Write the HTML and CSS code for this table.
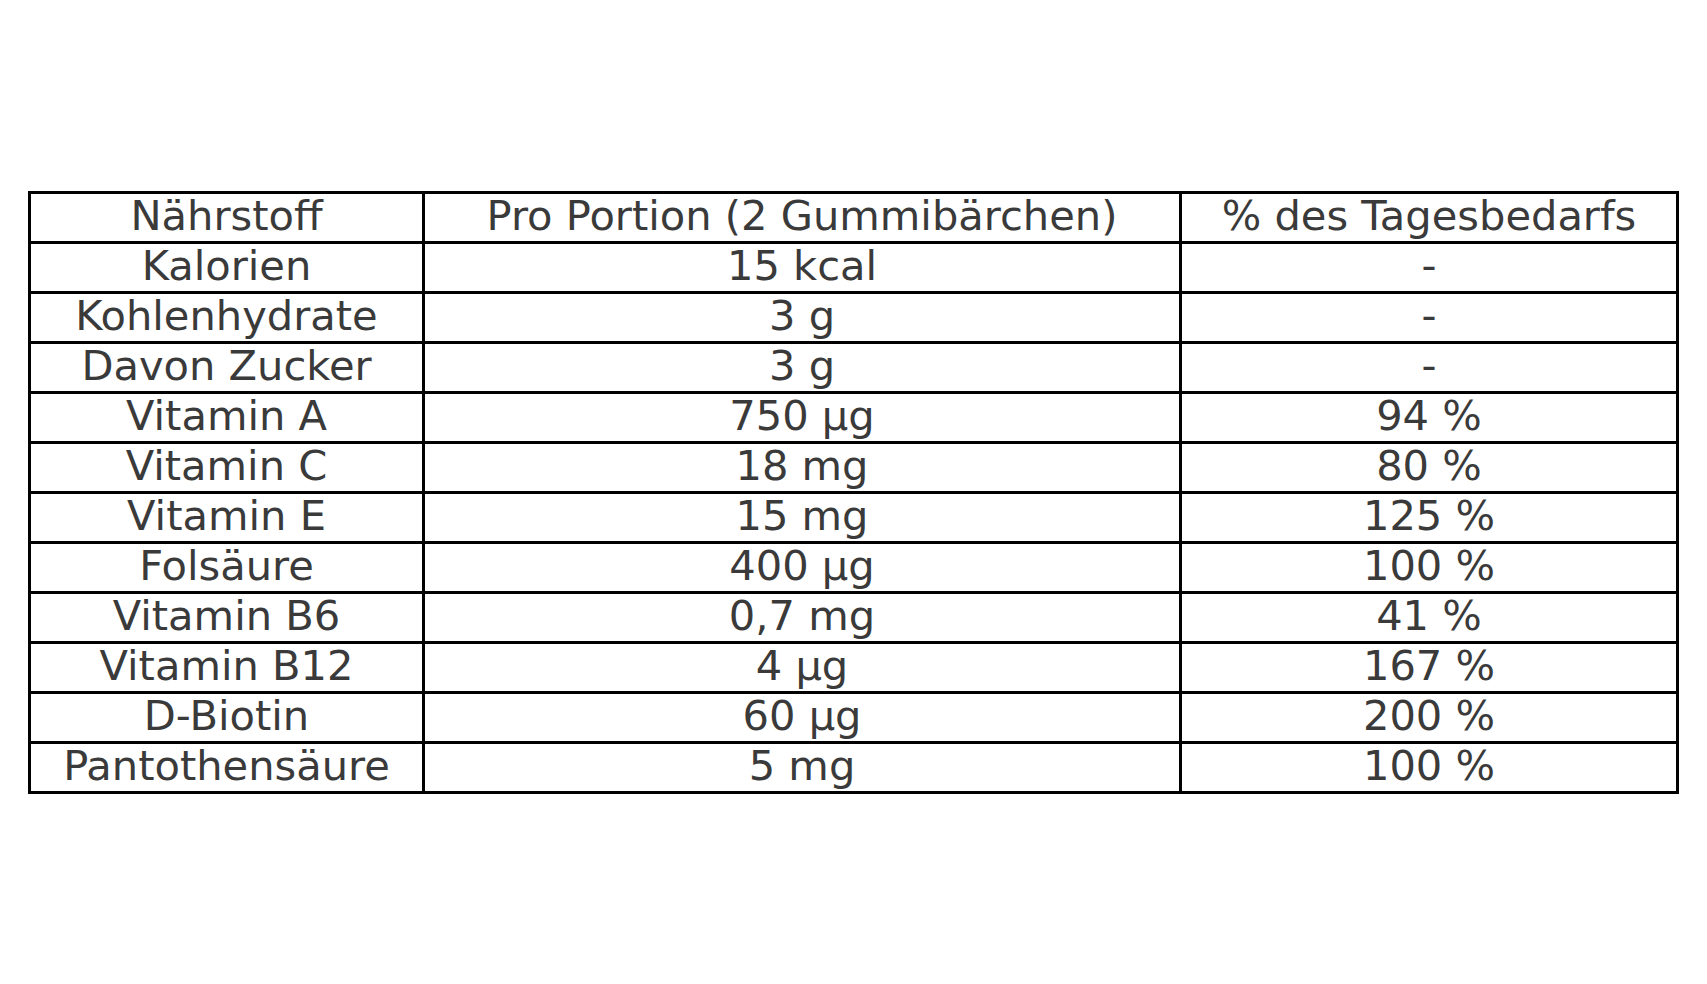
FILE: index.html
```html
<!DOCTYPE html>
<html lang="de">
<head>
<meta charset="utf-8">
<title>Nährwerte</title>
<link rel="stylesheet" href="styles.css">
</head>
<body>
<div class="page">
<table class="nutri">
<colgroup><col class="c1"><col class="c2"><col class="c3"></colgroup>
<tbody>
<tr><td>Nährstoff</td><td>Pro Portion (2 Gummibärchen)</td><td>% des Tagesbedarfs</td></tr>
<tr><td>Kalorien</td><td>15 kcal</td><td>-</td></tr>
<tr><td>Kohlenhydrate</td><td>3 g</td><td>-</td></tr>
<tr><td>Davon Zucker</td><td>3 g</td><td>-</td></tr>
<tr><td>Vitamin A</td><td>750 µg</td><td>94 %</td></tr>
<tr><td>Vitamin C</td><td>18 mg</td><td>80 %</td></tr>
<tr><td>Vitamin E</td><td>15 mg</td><td>125 %</td></tr>
<tr><td>Folsäure</td><td>400 µg</td><td>100 %</td></tr>
<tr><td>Vitamin B6</td><td>0,7 mg</td><td>41 %</td></tr>
<tr><td>Vitamin B12</td><td>4 µg</td><td>167 %</td></tr>
<tr><td>D-Biotin</td><td>60 µg</td><td>200 %</td></tr>
<tr><td>Pantothensäure</td><td>5 mg</td><td>100 %</td></tr>
</tbody>
</table>
</div>
</body>
</html>
```
FILE: styles.css
```css
html, body {
  margin: 0;
  padding: 0;
  background: #ffffff;
}
.page {
  padding: 191px 0 0 28px;
}
.nutri {
  border-collapse: collapse;
  width: 1648px;
  table-layout: fixed;
  font-family: "DejaVu Sans", sans-serif;
  font-size: 41.6px;
  color: #3a3a3a;
}
.c1 { width: 394px; }
.c2 { width: 757px; }
.c3 { width: 497px; }
.nutri td {
  border: 3px solid #000000;
  height: 44px;
  padding: 0 0 3px 0;
  text-align: center;
  vertical-align: middle;
  line-height: 44px;
  white-space: nowrap;
}
```
